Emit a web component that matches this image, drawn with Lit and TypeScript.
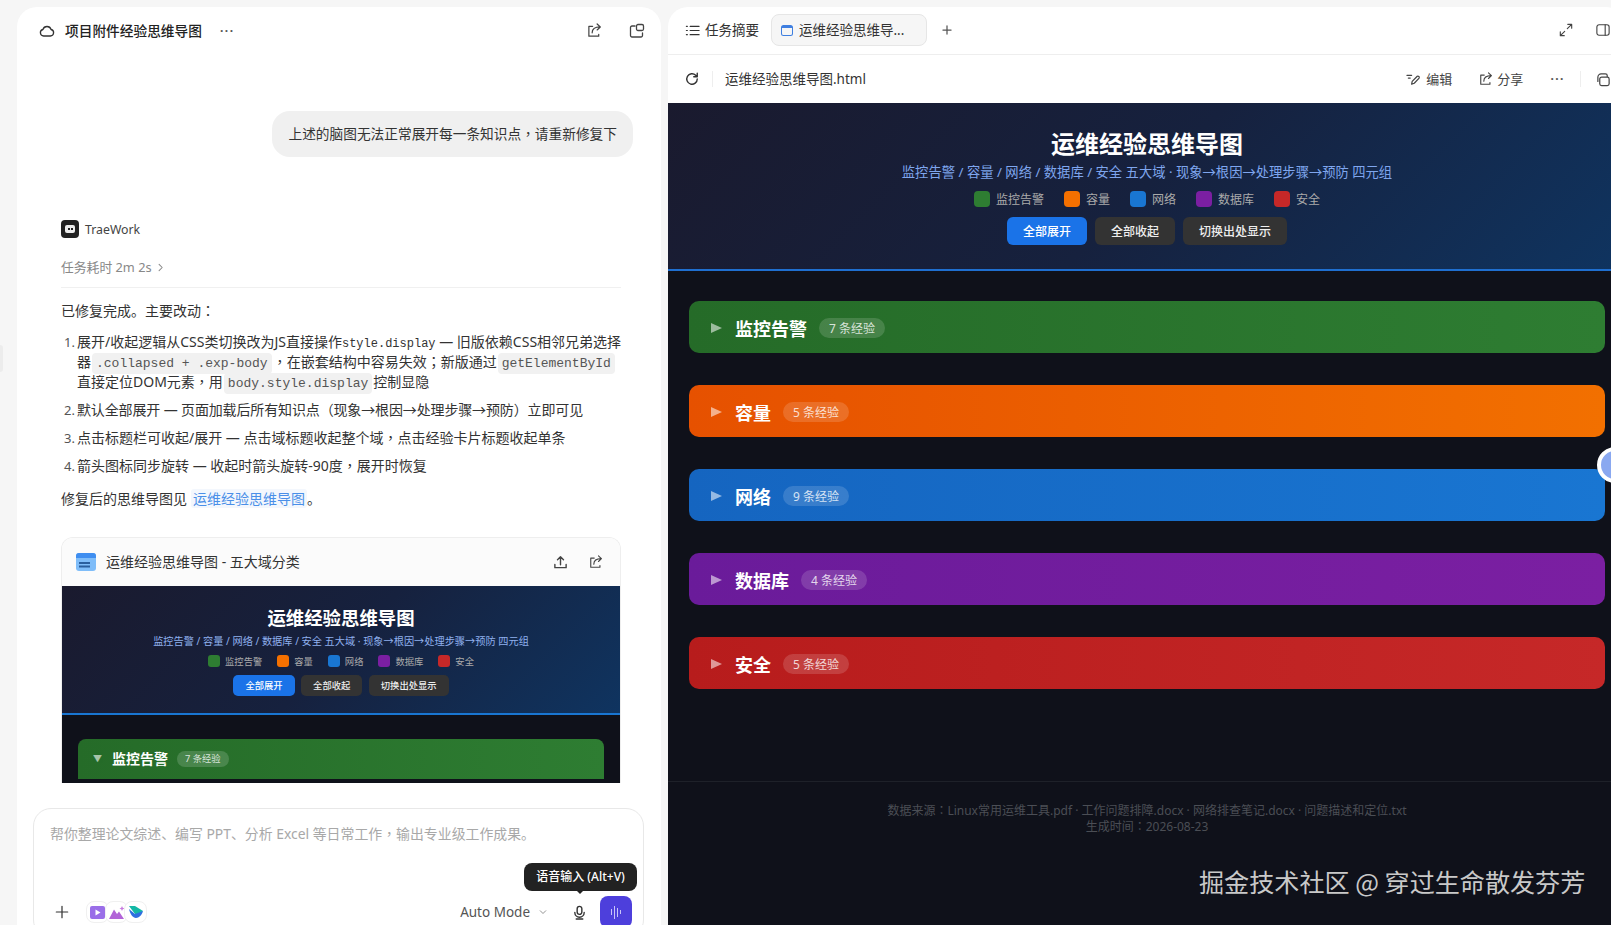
import { LitElement, html, svg, css } from "lit";
import { customElement } from "lit/decorators.js";

const stroke = (w: number, h: number, body: unknown, sw = 1.3) => html`<svg width=${w} height=${h} viewBox="0 0 16 16" fill="none" stroke="currentColor" stroke-width=${sw} stroke-linecap="round" stroke-linejoin="round">${body}</svg>`;
const sp = (d: string) => svg`<path d=${d}></path>`;

const ICON = {
  cloud: () => stroke(16, 16, sp("M4.6 13a3.3 3.3 0 0 1-.7-6.5 4.3 4.3 0 0 1 8.2 0 3.3 3.3 0 0 1-.7 6.5z")),
  share: (s = 15) => stroke(s, s, sp("M6 3.5H2v10.5h10.5V12M5.5 10.5c0-4 2.8-6.3 8.5-6.3M10.8 1l3.4 3.2-3.4 3.2")),
  copyPanel: () => stroke(16, 16, sp("M6 3H3a1.5 1.5 0 0 0-1.5 1.5v8A1.5 1.5 0 0 0 3 14h9a1.5 1.5 0 0 0 1.5-1.5V10M9 1.5h4A1.5 1.5 0 0 1 14.5 3v3A1.5 1.5 0 0 1 13 7.5H9A1.5 1.5 0 0 1 7.5 6V3A1.5 1.5 0 0 1 9 1.5z")),
  upload: () => stroke(15, 15, sp("M8 10.5V2M4.8 5 8 1.8 11.2 5M2 10v3.5h12V10"), 1.5),
  list: () => stroke(15, 15, sp("M5.5 3.5H15M5.5 8H15M5.5 12.5H15M1.5 3.5h1M1.5 8h1M1.5 12.5h1")),
  reload: () => stroke(14, 14, sp("M14 8a6 6 0 1 1-1.8-4.3L14 5.5M14 1.5v4h-4"), 1.6),
  plus: (s = 10) => stroke(s, s, sp("M8 1.5v13M1.5 8h13"), s > 10 ? 1.4 : 2),
  expand: () => stroke(14, 14, sp("M9.5 6.5 14.5 1.5M10 1.5h4.5V6M6.5 9.5l-5 5M6 14.5H1.5V10")),
  panel: () => stroke(14, 14, svg`<rect x="1" y="2" width="14" height="12" rx="2.5"></rect><path d="M10.5 2v12"></path>`),
  edit: () => stroke(15, 15, sp("M1 3.5h5M2.5 6.5h2M6 13l.6-3L12 4.5a1.5 1.5 0 0 1 2 2L8.8 12z")),
  copyTab: () => stroke(15, 15, sp("M4 7.5A2 2 0 0 1 6 5.5h6A2 2 0 0 1 14 7.5v5A2 2 0 0 1 12 14.5H6A2 2 0 0 1 4 12.5zM2 10V5.5A3.5 3.5 0 0 1 5.5 2H10a2 2 0 0 1 2 2v1.5")),
  chevron: () => stroke(9, 9, sp("M5.5 2.5 11 8l-5.5 5.5"), 1.8),
  down: () => stroke(8, 8, sp("M2.5 5.5 8 11l5.5-5.5"), 1.6),
  mic: () => stroke(15, 15, sp("M5.5 4a2.5 2.5 0 0 1 5 0v3.5a2.5 2.5 0 0 1-5 0zM3 8a5 5 0 0 0 10 0M4.5 15h7"), 1.5),
};

const DOMAINS = [
  { name: "监控告警", count: 7, cls: "green" },
  { name: "容量", count: 5, cls: "orange" },
  { name: "网络", count: 9, cls: "blue" },
  { name: "数据库", count: 4, cls: "purple" },
  { name: "安全", count: 5, cls: "red" },
];
const SUB = "监控告警 / 容量 / 网络 / 数据库 / 安全 五大域 · 现象→根因→处理步骤→预防 四元组";
const BTNS = ["全部展开", "全部收起", "切换出处显示"];

/* Reference punctuation sits centred in its cell: the TC face draws ，：；（） that way. */
const pc = (t: string) => t.split(/([，：；（）])/).map((part, i) => (i % 2 ? html`<span class="tc">${part}</span>` : part));

@customElement("app-root")
export class AppRoot extends LitElement {
  static styles = css`
    :host { display: flex; width: 1611px; height: 925px; overflow: hidden; box-sizing: border-box; padding: 7px 0 0 17px; gap: 7px; background: #f6f6f6; color: #222; position: relative;
      font-family: "Noto Sans", "Noto Sans CJK SC", sans-serif; font-size: 13.7px; line-height: 20px; }
    * { box-sizing: border-box; }
    svg { display: block; flex: none; }
    .tc { font-family: "Noto Sans CJK TC", sans-serif; line-height: 0; }
    .handle { position: absolute; left: 0; top: 345px; width: 3px; height: 27px; background: #ececec; border-radius: 0 4px 4px 0; }

    .left { flex: none; width: 644px; height: 940px; background: #fff; border-radius: 20px 20px 0 0; display: flex; flex-direction: column; }
    .lhead { flex: none; height: 48px; display: flex; align-items: center; padding: 0 16px 0 22px; color: #333; }
    .lhead .title { margin-left: 10px; font-weight: 500; color: #222; white-space: nowrap; }
    .dots { letter-spacing: 1.5px; font-size: 12px; font-weight: 700; line-height: 12px; color: #555; margin-top: -1px; white-space: nowrap; }
    .lhead .dots { margin-left: 18px; }
    .lhead .right { margin-left: auto; display: flex; gap: 27px; color: #444; }

    .chat { flex: none; padding: 0 40px 0 44px; display: flex; flex-direction: column; font-size: 14px; }
    .bubble { align-self: flex-end; margin: 56px -12px 0 0; height: 46px; padding: 13px 16px; background: #f0f0f0; border-radius: 18px; white-space: nowrap; color: #333; font-size: 13.7px; }
    .who { display: flex; align-items: center; gap: 6px; margin-top: 63px; height: 18px; font-size: 12.3px; color: #444; }
    .who .nm { margin-top: 1px; }
    .logo { width: 18px; height: 18px; border-radius: 4px; background: #222; display: flex; align-items: center; justify-content: center; }
    .logo i { display: block; width: 10px; height: 8px; border-radius: 2px; background: #eee; position: relative; }
    .logo i::before { content: ""; position: absolute; left: 2.5px; top: 3px; width: 2px; height: 2px; background: #222; box-shadow: 3px 0 0 #222; }
    .time { display: flex; align-items: center; gap: 4px; margin-top: 20px; height: 18px; font-size: 12.8px; color: #888; }
    .rule { height: 1px; background: #f0f0f0; margin-top: 11px; }
    .p { margin: 13px 0 0; color: #333; white-space: nowrap; }
    ol { list-style: none; margin: 11px 0 0; padding: 0; display: flex; flex-direction: column; gap: 8px; color: #333; }
    li { display: flex; line-height: 20px; }
    .num { flex: none; width: 16px; padding-left: 3px; font-size: 13px; color: #555; }
    .txt { white-space: nowrap; }
    .tight { letter-spacing: -.14px; }
    .line { display: block; height: 20px; }
    .mono { font-family: "Liberation Mono", monospace; font-size: 12px; line-height: 1; }
    code { font-family: "Liberation Mono", monospace; font-size: 13px; line-height: 1; background: #f1f1f1; color: #555; border-radius: 4px; padding: 3px 4px; margin: 0 1px; }
    .link { color: #4a8fe8; background: #f3f7fd; border-radius: 3px; padding: 0 2px; margin-left: 4px; }
    .p.last { margin-top: 13px; }

    .card { margin-top: 28px; border: 1px solid #eee; border-bottom: 0; border-radius: 12px 12px 0 0; overflow: hidden; }
    .chead { height: 48px; background: #fbfbfb; display: flex; align-items: center; padding: 0 17px 0 14px; color: #333; }
    .fileic { width: 20px; height: 18px; border-radius: 3px; background: #7fbdf9; position: relative; overflow: hidden; }
    .fileic::before { content: ""; position: absolute; left: 0; right: 0; top: 0; height: 5px; background: #3f8ef0; }
    .fileic::after { content: ""; position: absolute; left: 3px; top: 9px; width: 11px; height: 1.5px; background: #2a5f9e; box-shadow: 0 3.5px 0 0 #2a5f9e; }
    .chead .t { margin-left: 10px; white-space: nowrap; }
    .chead .right { margin-left: auto; display: flex; gap: 21px; color: #444; }

    .thumb { height: 197px; background: #0f111a; overflow: hidden; }
    .thead { height: 129px; padding-top: 20px; text-align: center; background: linear-gradient(135deg, #1a1a2e, #16213e 50%, #0f3460); border-bottom: 2px solid #1976d2; }
    .thead .h { font-size: 18.4px; font-weight: 700; line-height: 24px; color: #fff; }
    .thead .s { font-size: 10.2px; line-height: 14px; margin-top: 4px; color: #8fb0ee; white-space: nowrap; }
    .thead .lg { display: flex; justify-content: center; gap: 15px; margin-top: 7px; height: 12px; font-size: 9.3px; line-height: 13px; color: #aaa; }
    .thead .lg span { display: flex; gap: 5px; }
    .thead .lg i { width: 12px; height: 12px; border-radius: 3px; }
    .thead .bs { display: flex; justify-content: center; gap: 6.5px; margin-top: 8px; }
    .thead .bs b { font-weight: 500; height: 21px; line-height: 21px; font-size: 9.3px; padding: 0 12px; border-radius: 5px; background: #333; color: #eee; }
    .thead .bs b:first-child { background: #1a73e8; color: #fff; }
    .tbar { margin: 24px 16px 0; height: 40px; border-radius: 8px 8px 0 0; display: flex; align-items: center; padding-left: 15px; background: linear-gradient(90deg, #256b28, #2e7d32); color: #fff; }
    .tbar .a { font-size: 9px; opacity: .6; }
    .tbar .n { font-size: 14px; font-weight: 700; margin-left: 10px; }
    .tbar .c { margin-left: 9px; height: 16px; line-height: 16px; font-size: 9.3px; padding: 0 8px; border-radius: 8px; background: rgba(255,255,255,.16); color: rgba(255,255,255,.8); white-space: nowrap; }

    .composer { flex: none; position: relative; margin: 25px 17px 0 16px; height: 130px; border: 1px solid #e8e8e8; border-radius: 18px; padding: 15px 11px 0 16px; }
    .ph { color: #a8a8a8; white-space: nowrap; font-size: 13.9px; }
    .row { display: flex; align-items: center; height: 32px; margin-top: 52px; padding-left: 5px; }
    .row .add { color: #333; }
    .chips { display: flex; margin-left: 17px; }
    .chip { width: 23px; height: 22px; margin-right: -4px; background: #fff; border: 1px solid #f0f0f0; border-radius: 8px; display: flex; align-items: center; justify-content: center; }
    .mode { margin-left: auto; font-size: 13.5px; color: #555; white-space: nowrap; }
    .row .dn { margin-left: 9px; color: #777; }
    .row .mic { margin-left: 25px; color: #333; }
    .send { margin-left: 13px; width: 32px; height: 32px; border-radius: 8px; background: #4d3fdc; display: flex; align-items: center; justify-content: center; gap: 1.5px; }
    .send i { display: block; width: 1.5px; background: #c8c4f8; }
    .tip { position: absolute; left: 490px; top: 54px; width: 113px; height: 28px; background: #222; border-radius: 8px; color: #fff; font-size: 12px; font-weight: 500; line-height: 28px; text-align: center; white-space: nowrap; }
    .tip::after { content: ""; position: absolute; left: 52px; bottom: -3px; border: 4px solid transparent; border-bottom: 0; border-top-color: #222; }

    .right-panel { flex: none; position: relative; width: 958px; height: 940px; background: #fff; border-radius: 20px 20px 0 0; overflow: hidden; display: flex; flex-direction: column; }
    .tabs { flex: none; height: 48px; border-bottom: 1px solid #eee; display: flex; align-items: center; padding: 0 16px 1px 17px; color: #333; }
    .tabs .sum { margin-left: 5px; white-space: nowrap; font-size: 13.5px; }
    .tab { margin-left: 12px; width: 156px; height: 32px; background: #f6f6f6; border: 1px solid #e6e6e6; border-radius: 8px; display: flex; align-items: center; padding-left: 9px; white-space: nowrap; font-size: 13.5px; }
    .tabic { width: 12px; height: 11px; border: 1.5px solid #3f7fe0; border-radius: 2.5px; border-top-width: 3px; }
    .tab span { margin-left: 6px; }
    .tabs .pl { margin-left: 15px; color: #555; }
    .tabs .rt { margin-left: auto; display: flex; gap: 23px; color: #444; }
    .bar { flex: none; height: 48px; display: flex; align-items: center; padding: 0 15px 0 17px; color: #333; }
    .vr { width: 1px; height: 16px; background: #eee; }
    .bar .fn { margin-left: 12px; white-space: nowrap; font-size: 13.5px; }
    .bar .vr.a { margin-left: 13px; }
    .bar .rt { margin-left: auto; display: flex; align-items: center; color: #444; font-size: 13px; white-space: nowrap; }
    .act { display: flex; align-items: center; gap: 5px; }
    .act.s { gap: 4px; margin-left: 27px; }
    .bar .dots { margin-left: 27px; }
    .bar .vr.b { margin: 0 15px 0 15px; }

    .page { flex: 1; background: #0f111a; display: flex; flex-direction: column; }
    .phead { flex: none; height: 168px; padding-top: 26px; text-align: center; background: linear-gradient(135deg, #1a1a2e, #16213e 50%, #0f3460); border-bottom: 2px solid #1f6fd0; }
    .phead .h { font-size: 24px; font-weight: 700; line-height: 30px; color: #fff; }
    .phead .s { margin-top: 3px; color: #7fa6ee; white-space: nowrap; font-size: 13.3px; }
    .phead .lg { display: flex; justify-content: center; gap: 20px; margin-top: 9px; height: 16px; font-size: 12px; line-height: 17px; color: #aaa; }
    .phead .lg span { display: flex; gap: 6px; }
    .phead .lg i { width: 16px; height: 16px; border-radius: 4px; }
    .phead .bs { display: flex; justify-content: center; gap: 8px; margin-top: 10px; }
    .phead .bs b { font-weight: 500; height: 28px; line-height: 29px; font-size: 12px; padding: 0 16px; border-radius: 6px; background: #333; color: #eee; }
    .phead .bs b:first-child { background: #1a73e8; color: #fff; }
    .s-green { background: #2e7d32; } .s-orange { background: #f57000; } .s-blue { background: #1976d2; } .s-purple { background: #7b1fa2; } .s-red { background: #c62828; }

    .domains { flex: none; padding: 30px 21px 0 21px; display: flex; flex-direction: column; gap: 32px; }
    .dom { height: 52px; border-radius: 10px; display: flex; align-items: center; padding: 2px 0 0 22px; color: #fff; }
    .green { background: linear-gradient(90deg, #256b28, #2e7d32); }
    .orange { background: linear-gradient(90deg, #e65100, #f27000); }
    .blue { background: linear-gradient(90deg, #1565c0, #1976d2); }
    .purple { background: linear-gradient(90deg, #6a1b9a, #7b1fa2); }
    .red { background: linear-gradient(90deg, #b71c1c, #c62828); }
    .tri { width: 0; height: 0; border-left: 11px solid rgba(255,255,255,.55); border-top: 5.5px solid transparent; border-bottom: 5.5px solid transparent; }
    .dom .n { margin: 1px 0 0 13px; font-size: 18px; font-weight: 700; line-height: 24px; }
    .dom .c { margin-left: 12px; height: 20px; line-height: 21px; padding: 0 10px; border-radius: 10px; font-size: 12px; background: rgba(255,255,255,.15); color: rgba(255,255,255,.8); white-space: nowrap; }
    .foot { flex: none; margin-top: 92px; border-top: 1px solid #1e2129; padding-top: 21px; text-align: center; font-size: 12px; line-height: 16px; color: #4b4e55; white-space: nowrap; }

    .mark { position: absolute; left: 531px; top: 860px; font-size: 25.1px; line-height: 28px; color: #c9c9c9; white-space: nowrap; font-family: "Noto Sans CJK SC", sans-serif; }
    .float { position: absolute; left: 929px; top: 440px; width: 36px; height: 36px; border-radius: 50%; background: #8aa8f0; border: 4px solid #fff; }
  `;

  private thumbnail() {
    return html`<div class="thumb">
      <div class="thead">
        <div class="h">运维经验思维导图</div>
        <div class="s">${SUB}</div>
        <div class="lg">${DOMAINS.map((d) => html`<span><i class="s-${d.cls}"></i>${d.name}</span>`)}</div>
        <div class="bs">${BTNS.map((b) => html`<b>${b}</b>`)}</div>
      </div>
      <div class="tbar"><span class="a">▼</span><span class="n">监控告警</span><span class="c">7 条经验</span></div>
    </div>`;
  }

  private chips() {
    return html`<div class="chips">
      <div class="chip"><svg width="15" height="13" viewBox="0 0 15 13"><rect width="15" height="13" rx="2" fill="#9a6ee8"></rect><path d="M5.5 3.5 10.5 6.5 5.5 9.5z" fill="#fff"></path></svg></div>
      <div class="chip"><svg width="16" height="13" viewBox="0 0 16 13"><path d="M0 13 5 3.5 8 8 10 5.5 15 13z" fill="#b264d8"></path><path d="M13 0l.8 1.7 1.7.8-1.7.8L13 5l-.8-1.7-1.7-.8 1.7-.8z" fill="#c77adf"></path></svg></div>
      <div class="chip"><svg width="14" height="14" viewBox="0 0 14 14"><path d="M0 1h6l8 5-4 3H6z" fill="#14b8a6"></path><path d="M0 4l6 5 8-3c-1 4-4 7-7 7-3 0-6-4-7-9z" fill="#2f6fe0"></path></svg></div>
    </div>`;
  }

  render() {
    return html`
      <div class="handle"></div>
      <section class="left">
        <header class="lhead">
          ${ICON.cloud()}<span class="title">项目附件经验思维导图</span><span class="dots">···</span>
          <div class="right">${ICON.share()}${ICON.copyPanel()}</div>
        </header>
        <div class="chat">
          <div class="bubble">${pc("上述的脑图无法正常展开每一条知识点，请重新修复下")}</div>
          <div class="who"><span class="logo"><i></i></span><span class="nm">TraeWork</span></div>
          <div class="time">任务耗时 2m 2s ${ICON.chevron()}</div>
          <div class="rule"></div>
          <p class="p">${pc("已修复完成。主要改动：")}</p>
          <ol>
            <li><span class="num">1.</span><span class="txt">
              <span class="line">展开/收起逻辑从CSS类切换改为JS直接操作<span class="mono">style.display</span> — 旧版依赖CSS相邻兄弟选择</span>
              <span class="line">器<code>.collapsed + .exp-body</code>${pc("，在嵌套结构中容易失效；新版通过")}<code>getElementById</code></span>
              <span class="line">直接定位DOM元素${pc("，")}用<code>body.style.display</code>控制显隐</span>
            </span></li>
            <li><span class="num">2.</span><span class="txt tight">${pc("默认全部展开 — 页面加载后所有知识点（现象→根因→处理步骤→预防）立即可见")}</span></li>
            <li><span class="num">3.</span><span class="txt">${pc("点击标题栏可收起/展开 — 点击域标题收起整个域，点击经验卡片标题收起单条")}</span></li>
            <li><span class="num">4.</span><span class="txt">${pc("箭头图标同步旋转 — 收起时箭头旋转-90度，展开时恢复")}</span></li>
          </ol>
          <p class="p last">修复后的思维导图见<span class="link">运维经验思维导图</span>。</p>
          <div class="card">
            <div class="chead">
              <span class="fileic"></span><span class="t">运维经验思维导图 - 五大域分类</span>
              <div class="right">${ICON.upload()}${ICON.share(14)}</div>
            </div>
            ${this.thumbnail()}
          </div>
        </div>
        <div class="composer">
          <div class="ph">${pc("帮你整理论文综述、编写 PPT、分析 Excel 等日常工作，输出专业级工作成果。")}</div>
          <div class="row">
            <span class="add">${ICON.plus(14)}</span>
            ${this.chips()}
            <span class="mode">Auto Mode</span><span class="dn">${ICON.down()}</span>
            <span class="mic">${ICON.mic()}</span>
            <span class="send"><i style="height:6px"></i><i style="height:13px"></i><i style="height:9px"></i><i style="height:4px"></i></span>
          </div>
          <div class="tip">语音输入 (Alt+V)</div>
        </div>
      </section>

      <section class="right-panel">
        <div class="tabs">
          ${ICON.list()}<span class="sum">任务摘要</span>
          <div class="tab"><i class="tabic"></i><span>运维经验思维导...</span></div>
          <span class="pl">${ICON.plus()}</span>
          <div class="rt">${ICON.expand()}${ICON.panel()}</div>
        </div>
        <div class="bar">
          ${ICON.reload()}<i class="vr a"></i><span class="fn">运维经验思维导图.html</span>
          <div class="rt">
            <span class="act">${ICON.edit()}编辑</span>
            <span class="act s">${ICON.share(14)}分享</span>
            <span class="dots">···</span>
            <i class="vr b"></i>${ICON.copyTab()}
          </div>
        </div>
        <div class="page">
          <div class="phead">
            <div class="h">运维经验思维导图</div>
            <div class="s">${SUB}</div>
            <div class="lg">${DOMAINS.map((d) => html`<span><i class="s-${d.cls}"></i>${d.name}</span>`)}</div>
            <div class="bs">${BTNS.map((b) => html`<b>${b}</b>`)}</div>
          </div>
          <div class="domains">
            ${DOMAINS.map((d) => html`<div class="dom ${d.cls}"><i class="tri"></i><span class="n">${d.name}</span><span class="c">${d.count} 条经验</span></div>`)}
          </div>
          <div class="foot">${pc("数据来源：Linux常用运维工具.pdf · 工作问题排障.docx · 网络排查笔记.docx · 问题描述和定位.txt")}<br>${pc("生成时间：2026-08-23")}</div>
        </div>
        <div class="mark">掘金技术社区 @ 穿过生命散发芬芳</div>
        <div class="float"></div>
      </section>
    `;
  }
}
